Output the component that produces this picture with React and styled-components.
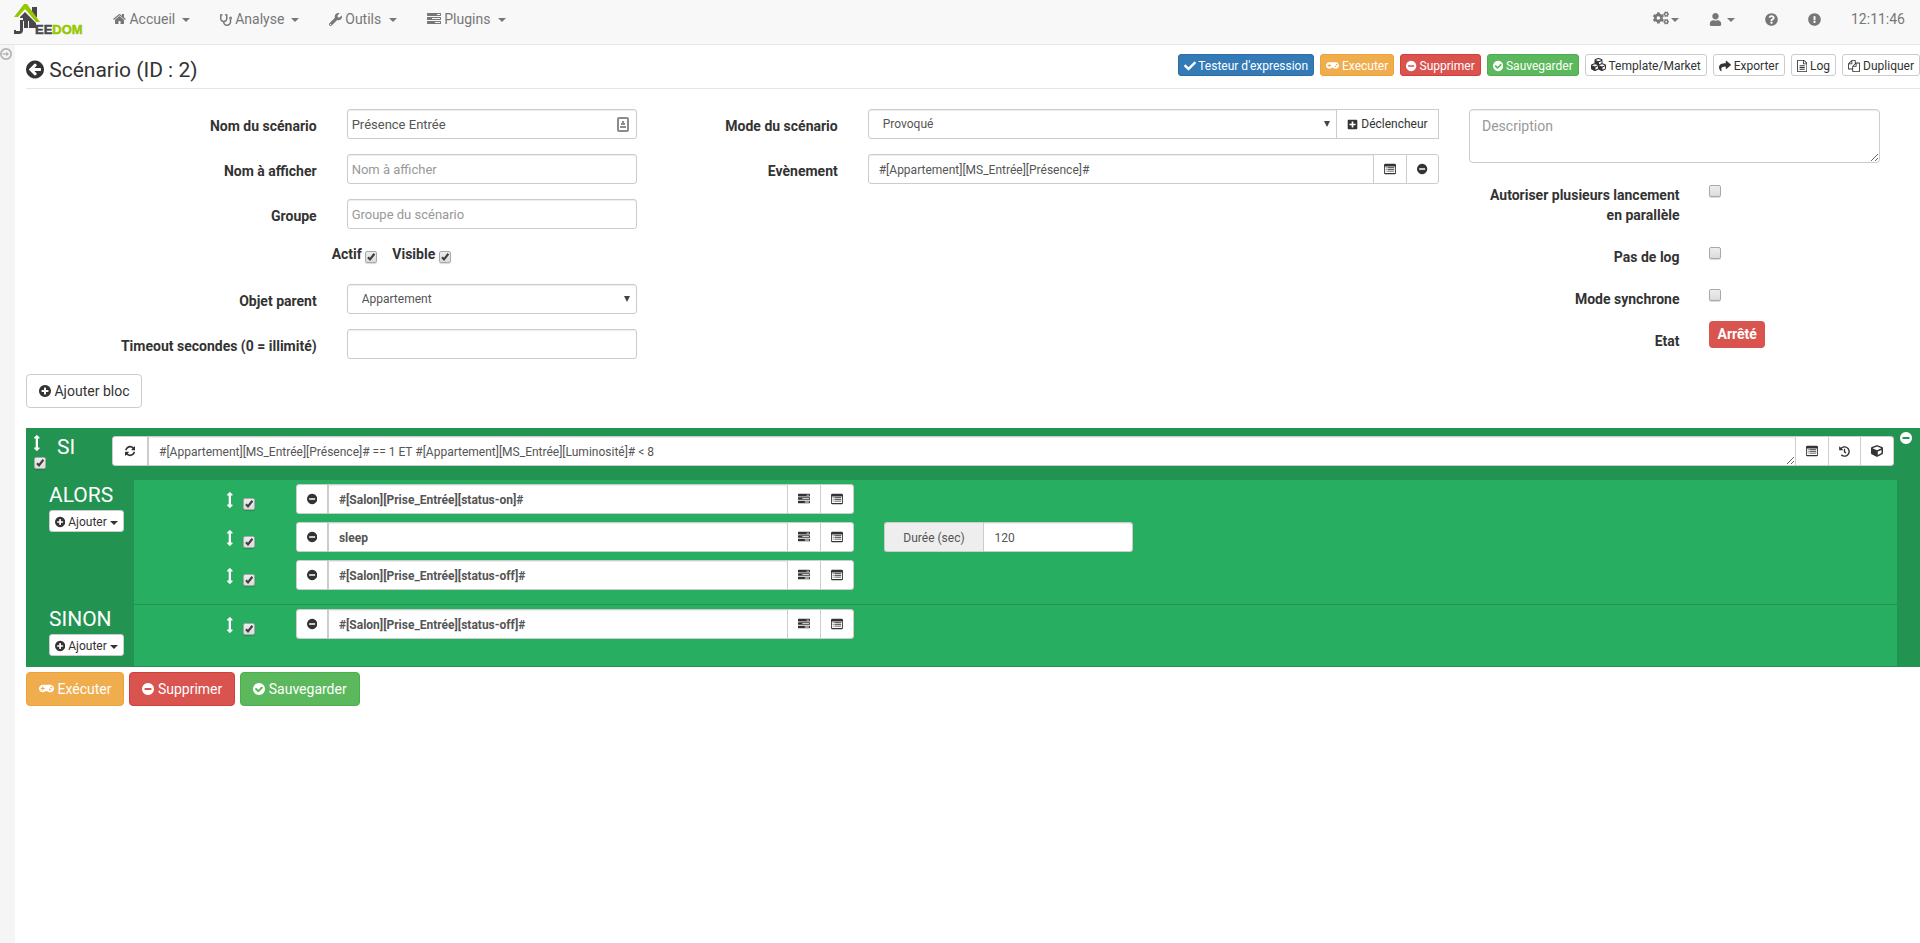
import React from "react";
import styled, { createGlobalStyle } from "styled-components";
import {
  FaStethoscope,
  FaWrench,
  FaCogs,
  FaUser,
  FaQuestionCircle,
  FaExclamationCircle,
  FaCheck,
  FaGamepad,
  FaCubes,
  FaCube,
  FaShare,
  FaPlusSquare,
  FaHistory,
} from "react-icons/fa";

const DISC =
  "M1664 896q0 209-103 385.5t-279.5 279.5-385.5 103-385.5-103-279.5-279.5-103-385.5 103-385.5 279.5-279.5 385.5-103 385.5 103 279.5 279.5 103 385.5z";

const icons = {
  home: {
    box: "64 0 1664 1792",
    d: "M1472 992v480q0 26-19 45t-45 19h-384v-384h-256v384h-384q-26 0-45-19t-19-45v-480q0-1 .5-3t.5-3l575-474 575 474q1 2 1 6zm223-69l-62 74q-8 9-21 11h-3q-13 0-21-7l-692-577-692 577q-12 8-24 7-13-2-21-11l-62-74q-8-10-7-23.5t11-21.5l719-599q32-26 76-26t76 26l244 204v-195q0-14 9-23t23-9h192q14 0 23 9t9 23v408l219 182q10 8 11 21.5t-7 23.5z",
  },
  tasks: {
    box: "0 0 1792 1792",
    d: "M1024 1408h640v-128h-640v128zm-384-512h1024v-128h-1024v128zm640-512h384v-128h-384v128zm512 832v256q0 26-19 45t-45 19h-1664q-26 0-45-19t-19-45v-256q0-26 19-45t45-19h1664q26 0 45 19t19 45zm0-512v256q0 26-19 45t-45 19h-1664q-26 0-45-19t-19-45v-256q0-26 19-45t45-19h1664q26 0 45 19t19 45zm0-512v256q0 26-19 45t-45 19h-1664q-26 0-45-19t-19-45v-256q0-26 19-45t45-19h1664q26 0 45 19t19 45z",
  },
  minus: {
    box: "128 0 1536 1792",
    d: "M1344 960v-128q0-26-19-45t-45-19h-768q-26 0-45 19t-19 45v128q0 26 19 45t45 19h768q26 0 45-19t19-45z" + DISC,
  },
  plus: {
    box: "128 0 1536 1792",
    d: "M1344 960v-128q0-26-19-45t-45-19h-256v-256q0-26-19-45t-45-19h-128q-26 0-45 19t-19 45v256h-256q-26 0-45 19t-19 45v128q0 26 19 45t45 19h256v256q0 26 19 45t45 19h128q26 0 45-19t19-45v-256h256q26 0 45-19t19-45z" + DISC,
  },
  checkCircle: {
    box: "128 0 1536 1792",
    d: "M1412 734q0-28-18-46l-91-90q-19-19-45-19t-45 19l-408 407-226-226q-19-19-45-19t-45 19l-91 90q-18 18-18 46 0 27 18 45l362 362q19 19 45 19 27 0 46-19l543-543q18-18 18-45z" + DISC,
  },
  back: {
    box: "128 0 1536 1792",
    d: "M1408 960v-128q0-26-19-45t-45-19h-502l189-189q19-19 19-45t-19-45l-91-91q-18-18-45-18t-45 18l-362 362-91 91q-18 18-18 45t18 45l91 91 362 362q18 18 45 18t45-18l91-91q18-18 18-45t-18-45l-189-189h502q26 0 45-19t19-45z" + DISC,
  },
  refresh: {
    box: "128 0 1536 1792",
    d: "M1639 1056q0 5-1 7-64 268-268 434.5t-478 166.5q-146 0-282.5-55t-243.5-157l-129 129q-19 19-45 19t-45-19-19-45v-448q0-26 19-45t45-19h448q26 0 45 19t19 45-19 45l-137 137q71 66 161 102t187 36q134 0 250-65t186-179q11-17 53-117 8-23 30-23h192q13 0 22.5 9.5t9.5 22.5zm25-800v448q0 26-19 45t-45 19h-448q-26 0-45-19t-19-45 19-45l138-138q-148-137-349-137-134 0-250 65t-186 179q-11 17-53 117-8 23-30 23h-199q-13 0-22.5-9.5t-9.5-22.5v-7q65-268 270-434.5t480-166.5q146 0 284 55.5t245 156.5l130-129q19-19 45-19t45 19 19 45z",
  },
  arrowsV: {
    box: "576 0 640 1792",
    d: "M1216 320q0 26-19 45t-45 19h-128v1024h128q26 0 45 19t19 45-19 45l-256 256q-19 19-45 19t-45-19l-256-256q-19-19-19-45t19-45 45-19h128v-1024h-128q-26 0-45-19t-19-45 19-45l256-256q19-19 45-19t45 19l256 256q19 19 19 45z",
  },
  listAlt: {
    box: "0 0 1792 1792",
    d: "M160 128h1472q66 0 113 47t47 113v1216q0 66-47 113t-113 47h-1472q-66 0-113-47t-47-113v-1216q0-66 47-113t113-47zM128 512v960q0 32 32 32h1472q32 0 32-32v-960zM256 640h128v128h-128zM512 640h1024v128h-1024zM256 896h128v128h-128zM512 896h1024v128h-1024zM256 1152h128v128h-128zM512 1152h1024v128h-1024z",
  },
  fileText: {
    box: "128 0 1536 1792",
    d: "M224 0h896q40 0 88 20t76 48l312 312q28 28 48 76t20 88v1152q0 40-28 68t-68 28h-1344q-40 0-68-28t-28-68v-1600q0-40 28-68t68-28zM256 128v1536h1280v-1024h-416q-40 0-68-28t-28-68v-416zM1152 136v376h376q-10-29-22-41l-313-313q-12-12-41-22zM512 800h768v128h-768zM512 1056h768v128h-768zM512 1312h768v128h-768z",
  },
  copy: {
    box: "0 0 1792 1792",
    d: "M1696 384q40 0 68 28t28 68v1216q0 40-28 68t-68 28h-960q-40 0-68-28t-28-68v-288h-544q-40 0-68-28t-28-68v-672q0-40 20-88t48-76l408-408q28-28 76-48t88-20h416q40 0 68 28t28 68v328q68-40 128-40zm-544 213l-299 299h299v-299zm-640-384l-299 299h299v-299zm196 647l316-316v-416h-384v416q0 40-28 68t-68 28h-416v640h512v-256q0-40 20-88t48-76zm956 804v-1152h-384v416q0 40-28 68t-68 28h-416v640h896z",
  },
  openNext: {
    box: "128 0 1536 1792",
    d: DISC + "M896 352a544 544 0 1 0 0 1088a544 544 0 1 0 0-1088zM480 800h448v-224l340 320-340 320v-224h-448z",
  },
};

const Glyph = styled.svg`
  height: 1em;
  width: auto;
  fill: currentColor;
  fill-rule: evenodd;
  vertical-align: -0.14em;
`;

const Icon = ({ name }) => (
  <Glyph viewBox={icons[name].box} aria-hidden="true">
    <path d={icons[name].d} />
  </Glyph>
);

const GlobalStyle = createGlobalStyle`
  * { box-sizing: border-box; }
  body {
    margin: 0;
    background: #fff;
    color: #333;
    font: 14px/20px Roboto, "Liberation Sans", sans-serif;
  }
  button, input, select, textarea { font-family: inherit; margin: 0; }
  svg { vertical-align: -0.14em; }
`;

const Page = styled.div`
  display: flex;
  flex-direction: column;
  min-height: 100vh;
  overflow-x: hidden;
`;

const Navbar = styled.nav`
  display: flex;
  align-items: flex-start;
  height: 45px;
  padding-left: 14px;
  background: #f8f8f8;
  border-bottom: 1px solid #e7e7e7;
`;

const Brand = styled.a`
  display: block;
  width: 84px;
  padding-top: 3px;

  svg {
    display: block;
  }
`;

const NavLink = styled.a`
  padding: 9px 15px;
  color: #777;
  text-decoration: none;
  white-space: nowrap;
`;

const NavRight = styled.div`
  display: flex;
  margin-left: auto;
`;

const Clock = styled.span`
  padding: 9px 15px;
  color: #777;
`;

const Caret = styled.span`
  display: inline-block;
  margin-left: ${(p) => p.$gap || 0}px;
  border-top: 4px solid;
  border-left: 4px solid transparent;
  border-right: 4px solid transparent;
  vertical-align: middle;
`;

const Body = styled.div`
  display: flex;
  flex: 1;
`;

const Sidebar = styled.aside`
  flex: none;
  width: 15px;
  background: #f5f5f5;
`;

const SidebarToggle = styled.button`
  display: block;
  padding: 2px 0;
  border: 0;
  background: none;
  color: #b5b5b5;
  font-size: 14px;
  line-height: 14px;
`;

const Content = styled.main`
  flex: 1;
  min-width: 0;
  padding: 9px 0 0 11px;
`;

const Header = styled.header`
  display: flex;
  justify-content: space-between;
  align-items: flex-start;
  height: 35px;
  margin-bottom: 20px;
  border-bottom: 1px solid #e5e5e5;
`;

const Title = styled.h1`
  margin: 0;
  font-size: 21px;
  font-weight: 400;
  line-height: 32px;
`;

const Toolbar = styled.div`
  display: flex;
  gap: 6px;
`;

const tones = {
  plain: ["#fff", "#ccc", "#333"],
  primary: ["#337ab7", "#2e6da4", "#fff"],
  warning: ["#f0ad4e", "#eea236", "#fff"],
  danger: ["#d9534f", "#d43f3a", "#fff"],
  success: ["#5cb85c", "#4cae4c", "#fff"],
};

const Button = styled.button`
  padding: 6px 12px;
  border: 1px solid ${(p) => tones[p.$tone || "plain"][1]};
  border-radius: 4px;
  background: ${(p) => tones[p.$tone || "plain"][0]};
  color: ${(p) => tones[p.$tone || "plain"][2]};
  font-size: 14px;
  line-height: 20px;
  white-space: nowrap;
  cursor: pointer;
`;

const SmallButton = styled(Button)`
  padding: 2px 5px 0;
  border-radius: 3px;
  font-size: 12px;
  line-height: 18px;
`;

const Form = styled.form`
  display: grid;
  grid-template-columns: 4fr 5fr 3fr;
  margin: 0 -15px;
`;

const Row = styled.div`
  display: grid;
  grid-template-columns: ${(p) => p.$cols || "1fr 1fr"};
  margin-bottom: 15px;
`;

const Cell = styled.div`
  min-width: 0;
  padding: 0 15px;
`;

const Label = styled.label`
  padding: 7px 15px 0 20px;
  font-weight: 700;
  text-align: right;
`;

const TextInput = styled.input`
  display: block;
  flex: 1;
  width: 100%;
  min-width: 0;
  height: 30px;
  padding: ${(p) => (p.$tight ? "4px" : "6px 10px 4px")};
  border: 1px solid #ccc;
  border-radius: ${(p) => p.$radius || "3px"};
  background: #fff;
  box-shadow: inset 0 1px 1px rgba(0, 0, 0, 0.075);
  color: #555;
  font-size: ${(p) => (p.$tight ? 13 : 12)}px;
  font-weight: ${(p) => (p.$bold ? 700 : 400)};

  &::placeholder {
    color: #999;
  }
`;

// stacks a control and the drawing that sits on it
const Stack = styled.div`
  display: grid;
  flex: 1;
  align-items: center;

  > * {
    grid-area: 1 / 1;
  }

  > svg {
    justify-self: end;
    pointer-events: none;
  }
`;

const ContactMark = styled.svg`
  margin-right: 8px;
`;

const SelectArrow = styled.svg`
  margin-right: 7px;
  fill: #444;
`;

const SelectInput = styled.select`
  width: 100%;
  height: 30px;
  padding: 5px 14px;
  border: 1px solid #ccc;
  border-radius: ${(p) => p.$radius || "3px"};
  background: #fff;
  box-shadow: inset 0 1px 1px rgba(0, 0, 0, 0.075);
  color: #555;
  font-size: 12px;
  line-height: 18px;
  appearance: none;
`;

const Select = ({ id, value, $radius }) => (
  <Stack>
    <SelectInput id={id} $radius={$radius}>
      <option>{value}</option>
    </SelectInput>
    <SelectArrow width="6" height="7" viewBox="0 0 6 7">
      <path d="M0 0h6L3 6z" />
    </SelectArrow>
  </Stack>
);

const TextArea = styled.textarea`
  display: block;
  flex: 1;
  width: 100%;
  min-width: 0;
  height: ${(p) => p.$height}px;
  padding: ${(p) => (p.$small ? "6px 10px 4px" : "6px 12px")};
  border: 1px solid #ccc;
  border-radius: ${(p) => (p.$small ? 0 : 4)}px;
  background: #fff;
  box-shadow: inset 0 1px 1px rgba(0, 0, 0, 0.075);
  color: #555;
  font-size: ${(p) => (p.$small ? 12 : 14)}px;
  line-height: ${(p) => (p.$small ? 18 : 20)}px;
  overflow: hidden;
  resize: vertical;

  &::placeholder {
    color: #999;
  }
`;

const CheckBoxWrap = styled.span`
  display: inline-grid;
  width: 12px;
  height: 12px;
  vertical-align: -4px;

  > * {
    grid-area: 1 / 1;
  }

  > svg {
    pointer-events: none;
  }
`;

const CheckInput = styled.input`
  width: 12px;
  height: 12px;
  border: 1px solid #a9a9a9;
  border-radius: 2px;
  background: linear-gradient(#ededed, #dcdcdc);
  box-shadow: 0 1px 1px rgba(0, 0, 0, 0.15);
  appearance: none;
`;

const CheckBox = ({ id, checked, label }) => (
  <CheckBoxWrap>
    <CheckInput
      id={id}
      type="checkbox"
      defaultChecked={checked}
      aria-label={label}
    />
    {checked && (
      <svg width="12" height="12" viewBox="0 0 12 12" fill="none">
        <path d="M3 6.2L5 8.4L9.4 2.8" stroke="#404040" strokeWidth="2.2" />
      </svg>
    )}
  </CheckBoxWrap>
);

const InlineChecks = styled.div`
  display: flex;
  gap: 15px;
  height: 25px;
  margin: 0 0 15px 50%;
  font-weight: 700;
`;

const CheckCell = styled(Cell)`
  display: grid;
  align-content: start;
  padding-top: 7px;
`;

const BadgeCell = styled(Cell)`
  height: 20px;
`;

const Badge = styled.span`
  padding: 5px 8px 6px;
  border-radius: 4px;
  background: #d9534f;
  color: #fff;
  font-weight: 700;
`;

const Group = styled.div`
  display: flex;
`;

const Addon = styled.button`
  flex: none;
  min-width: ${(p) => p.$width || 33}px;
  height: 30px;
  margin-left: ${(p) => (p.$first ? 0 : -1)}px;
  padding: 0 8px;
  border: 1px solid #ccc;
  border-radius: ${(p) => p.$radius || 0};
  background: #fff;
  color: #333;
  font-size: 12px;
  line-height: 18px;
`;

const Block = styled.section`
  margin-top: 20px;
  margin-bottom: 5px;
  padding-bottom: 1px;
  background: #239351;
  color: #fff;
`;

const Condition = styled.div`
  display: flex;
  height: 52px;
  padding: 3px 8px 0;
`;

const Handle = styled.div`
  display: flex;
  flex-direction: column;
  align-items: flex-start;
  gap: 6px;
  width: 23px;
  padding-top: 4px;
  font-size: 16px;
  line-height: 16px;
`;

const Keyword = styled.div`
  font-size: 21px;
  line-height: 30px;
`;

const ConditionWord = styled(Keyword)`
  width: 55px;
  line-height: 32px;
`;

const ConditionGroup = styled(Group)`
  flex: 1;
  margin-right: 6px;
  padding-top: 5px;
`;

const RemoveBlock = styled.button`
  display: flex;
  align-self: flex-start;
  padding: 0;
  border: 0;
  background: none;
  color: #fff;
  font-size: 14px;
`;

const Branch = styled.div`
  display: flex;
  padding-right: 23px;
`;

const BranchName = styled.div`
  flex: none;
  width: 108px;
  padding: 0 0 10px 23px;
`;

const AddButton = styled(SmallButton)`
  display: block;
`;

const Actions = styled.div`
  flex: 1;
  padding: 4px 0 6px;
  border-top: ${(p) => (p.$ruled ? "1px solid #239351" : "0")};
  background: #27ae60;
`;

const Action = styled.div`
  display: grid;
  grid-template-columns: 1fr 4fr 7fr;
  margin-bottom: 8px;
`;

const ActionHandle = styled.div`
  padding: 7px 26px 0 0;
  text-align: right;

  > svg {
    height: 16px;
    margin-right: 10px;
  }
`;

const DurationGroup = styled(Group)`
  width: 25%;
`;

const DurationLabel = styled.label`
  width: 40%;
  height: 30px;
  padding: 6px 10px 4px;
  border: 1px solid #ccc;
  border-right: 0;
  border-radius: 3px 0 0 3px;
  background: #eee;
  color: #555;
  font-size: 12px;
  text-align: center;
  line-height: 18px;
  white-space: nowrap;
`;

const Footer = styled.footer`
  display: flex;
  gap: 5px;
`;

const Logo = () => (
  <svg width="72" height="33" viewBox="0 0 72 33" role="img" aria-label="Jeedom">
    <path d="M18 4h5v10h-1l-4-5z" fill="#47474d" />
    <path d="M11 9l11 11v5H9v2q0 4-4 4H0v-4h2v1h4V14z" fill="#47474d" />
    <path d="M6 15h3v2H6zM9 18h1v8H9z" fill="#f8f8f8" />
    <path d="M14 18h1v7h-1z" fill="#f8f8f8" />
    <path d="M0 14L10 1h3l13 18h-4L11 6 4 14z" fill="#96c800" />
    <text
      x="21"
      y="31"
      fontFamily="Liberation Sans, sans-serif"
      fontSize="13"
      fontWeight="700"
      fill="#47474d"
      stroke="#47474d"
      strokeWidth="0.5"
    >
      EE
      <tspan fill="#96c800" stroke="#96c800">
        DOM
      </tspan>
    </text>
  </svg>
);

const ActionRow = ({ value, duration }) => (
  <Action>
    <ActionHandle>
      <Icon name="arrowsV" />
      <CheckBox checked label="Activer l'action" />
    </ActionHandle>
    <Cell>
      <Group>
        <Addon $first $width={32} $radius="3px 0 0 3px" aria-label="Supprimer">
          <Icon name="minus" />
        </Addon>
        <TextInput $bold $radius="0" defaultValue={value} aria-label="Action" />
        <Addon $width={34} aria-label="Choisir une action">
          <Icon name="tasks" />
        </Addon>
        <Addon $width={34} $radius="0 3px 3px 0" aria-label="Choisir une commande">
          <Icon name="listAlt" />
        </Addon>
      </Group>
    </Cell>
    <Cell>
      {duration && (
        <DurationGroup>
          <DurationLabel htmlFor="duration">Durée (sec)</DurationLabel>
          <TextInput id="duration" $radius="0 3px 3px 0" defaultValue={duration} />
        </DurationGroup>
      )}
    </Cell>
  </Action>
);

const BranchRow = ({ name, actions, ruled }) => (
  <Branch>
    <BranchName>
      <Keyword>{name}</Keyword>
      <AddButton>
        <Icon name="plus" /> Ajouter <Caret />
      </AddButton>
    </BranchName>
    <Actions $ruled={ruled}>
      {actions.map((action, i) => (
        <ActionRow key={i} {...action} />
      ))}
    </Actions>
  </Branch>
);

const thenActions = [
  { value: "#[Salon][Prise_Entrée][status-on]#" },
  { value: "sleep", duration: "120" },
  { value: "#[Salon][Prise_Entrée][status-off]#" },
];

const elseActions = [{ value: "#[Salon][Prise_Entrée][status-off]#" }];

export default function App() {
  return (
    <Page>
      <GlobalStyle />
      <Navbar>
        <Brand href="#">
          <Logo />
        </Brand>
        <NavLink href="#">
          <Icon name="home" /> Accueil <Caret $gap={3} />
        </NavLink>
        <NavLink href="#">
          <FaStethoscope size={12} /> Analyse <Caret $gap={3} />
        </NavLink>
        <NavLink href="#">
          <FaWrench size={13} /> Outils <Caret $gap={4} />
        </NavLink>
        <NavLink href="#">
          <Icon name="tasks" /> Plugins <Caret $gap={4} />
        </NavLink>
        <NavRight>
          <NavLink href="#" aria-label="Configuration">
            <FaCogs size={16} />
            <Caret $gap={2} />
          </NavLink>
          <NavLink href="#" aria-label="Utilisateur">
            <FaUser size={13} /> <Caret $gap={2} />
          </NavLink>
          <NavLink href="#" aria-label="Aide">
            <FaQuestionCircle size={13} />
          </NavLink>
          <NavLink href="#" aria-label="Signaler">
            <FaExclamationCircle size={13} />
          </NavLink>
          <Clock>12:11:46</Clock>
        </NavRight>
      </Navbar>
      <Body>
        <Sidebar>
          <SidebarToggle aria-label="Ouvrir le menu">
            <Icon name="openNext" />
          </SidebarToggle>
        </Sidebar>
        <Content>
          <Header>
            <Title>
              <Icon name="back" /> Scénario (ID : 2)
            </Title>
            <Toolbar>
              <SmallButton $tone="primary">
                <FaCheck /> Testeur d'expression
              </SmallButton>
              <SmallButton $tone="warning">
                <FaGamepad size={13} /> Executer
              </SmallButton>
              <SmallButton $tone="danger">
                <Icon name="minus" /> Supprimer
              </SmallButton>
              <SmallButton $tone="success">
                <Icon name="checkCircle" /> Sauvegarder
              </SmallButton>
              <SmallButton>
                <FaCubes size={15} /> Template/Market
              </SmallButton>
              <SmallButton>
                <FaShare /> Exporter
              </SmallButton>
              <SmallButton>
                <Icon name="fileText" /> Log
              </SmallButton>
              <SmallButton>
                <Icon name="copy" /> Dupliquer
              </SmallButton>
            </Toolbar>
          </Header>

          <Form>
            <div>
              <Row>
                <Label htmlFor="name">Nom du scénario</Label>
                <Cell>
                  <Stack>
                    <TextInput id="name" $tight defaultValue="Présence Entrée" />
                    <ContactMark width="12" height="15" viewBox="0 0 12 15">
                      <rect x="1" y="1" width="10" height="13" rx="1" fill="#fff" stroke="#8c8c8c" strokeWidth="2" />
                      <path d="M5 4h2v2h1v2H4V6h1zM3 9h6v2H3z" fill="#8c8c8c" />
                    </ContactMark>
                  </Stack>
                </Cell>
              </Row>
              <Row>
                <Label htmlFor="display">Nom à afficher</Label>
                <Cell>
                  <TextInput id="display" $tight placeholder="Nom à afficher" />
                </Cell>
              </Row>
              <Row>
                <Label htmlFor="group">Groupe</Label>
                <Cell>
                  <TextInput id="group" $tight placeholder="Groupe du scénario" />
                </Cell>
              </Row>
              <InlineChecks>
                <label>
                  Actif <CheckBox checked />
                </label>
                <label>
                  Visible <CheckBox checked />
                </label>
              </InlineChecks>
              <Row>
                <Label htmlFor="parent">Objet parent</Label>
                <Cell>
                  <Select id="parent" value="Appartement" />
                </Cell>
              </Row>
              <Row>
                <Label htmlFor="timeout">Timeout secondes (0 = illimité)</Label>
                <Cell>
                  <TextInput id="timeout" $tight />
                </Cell>
              </Row>
            </div>

            <div>
              <Row $cols="1fr 3fr">
                <Label htmlFor="mode">Mode du scénario</Label>
                <Cell>
                  <Group>
                    <Select id="mode" value="Provoqué" $radius="3px 0 0 3px" />
                    <Addon type="button" $width={103}>
                      <FaPlusSquare size={11} /> Déclencheur
                    </Addon>
                  </Group>
                </Cell>
              </Row>
              <Row $cols="1fr 3fr">
                <Label htmlFor="event">Evènement</Label>
                <Cell>
                  <Group>
                    <TextInput
                      id="event"
                      $radius="3px 0 0 3px"
                      defaultValue="#[Appartement][MS_Entrée][Présence]#"
                    />
                    <Addon type="button" $width={34} aria-label="Choisir une commande">
                      <Icon name="listAlt" />
                    </Addon>
                    <Addon type="button" $radius="0 3px 3px 0" aria-label="Retirer">
                      <Icon name="minus" />
                    </Addon>
                  </Group>
                </Cell>
              </Row>
            </div>

            <div>
              <Row $cols="11fr 1fr">
                <Cell>
                  <TextArea $height={54} placeholder="Description" aria-label="Description" />
                </Cell>
              </Row>
              <Row>
                <Label htmlFor="parallel">
                  Autoriser plusieurs lancement en parallèle
                </Label>
                <CheckCell>
                  <CheckBox id="parallel" />
                </CheckCell>
              </Row>
              <Row>
                <Label htmlFor="nolog">Pas de log</Label>
                <CheckCell>
                  <CheckBox id="nolog" />
                </CheckCell>
              </Row>
              <Row>
                <Label htmlFor="sync">Mode synchrone</Label>
                <CheckCell>
                  <CheckBox id="sync" />
                </CheckCell>
              </Row>
              <Row>
                <Label as="span">Etat</Label>
                <BadgeCell>
                  <Badge>Arrêté</Badge>
                </BadgeCell>
              </Row>
            </div>
          </Form>

          <Button>
            <Icon name="plus" /> Ajouter bloc
          </Button>

          <Block>
            <Condition>
              <Handle>
                <Icon name="arrowsV" />
                <CheckBox checked label="Activer le bloc" />
              </Handle>
              <ConditionWord>SI</ConditionWord>
              <ConditionGroup>
                <Addon $first $width={36} $radius="3px 0 0 3px" aria-label="Répéter">
                  <Icon name="refresh" />
                </Addon>
                <TextArea
                  $small
                  $height={30}
                  aria-label="Condition"
                  defaultValue="#[Appartement][MS_Entrée][Présence]# == 1 ET #[Appartement][MS_Entrée][Luminosité]# < 8"
                />
                <Addon $width={34} aria-label="Choisir une commande">
                  <Icon name="listAlt" />
                </Addon>
                <Addon aria-label="Choisir un scénario">
                  <FaHistory size={11} />
                </Addon>
                <Addon $width={34} $radius="0 3px 3px 0" aria-label="Choisir un équipement">
                  <FaCube />
                </Addon>
              </ConditionGroup>
              <RemoveBlock aria-label="Supprimer le bloc">
                <Icon name="minus" />
              </RemoveBlock>
            </Condition>
            <BranchRow name="ALORS" actions={thenActions} />
            <BranchRow name="SINON" actions={elseActions} ruled />
          </Block>

          <Footer>
            <Button $tone="warning">
              <FaGamepad size={15} /> Exécuter
            </Button>
            <Button $tone="danger">
              <Icon name="minus" /> Supprimer
            </Button>
            <Button $tone="success">
              <Icon name="checkCircle" /> Sauvegarder
            </Button>
          </Footer>
        </Content>
      </Body>
    </Page>
  );
}
